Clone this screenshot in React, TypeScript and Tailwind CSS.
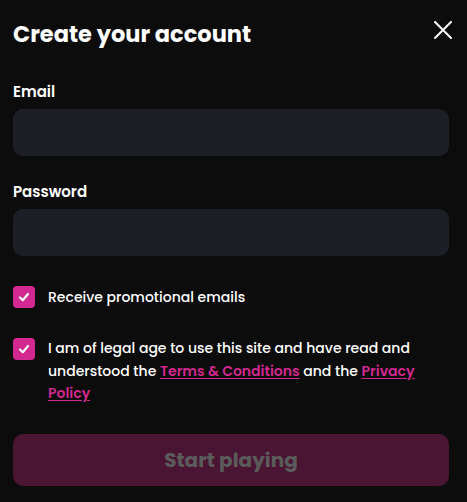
import React from "react";

const font = { fontFamily: "Poppins, 'DejaVu Sans', 'Noto Sans', sans-serif" };

function Check() {
  return (
    <div className="w-[22px] h-[22px] shrink-0 rounded-[4px] bg-[#d3288f] flex items-center justify-center">
      <svg width="14" height="14" viewBox="0 0 14 14" fill="none">
        <path d="M3 7.5 L5.8 10.2 L11 4" stroke="white" strokeWidth="2.2" strokeLinecap="round" strokeLinejoin="round" />
      </svg>
    </div>
  );
}

export default function App() {
  return (
    <div className="w-[467px] h-[502px] bg-[#0c0c0c] text-white pl-[13px] pr-[18px] pt-[18px] overflow-hidden" style={font}>
      <div className="flex items-start justify-between">
        <h1 className="text-[22.5px] leading-[32px] font-bold">Create your account</h1>
        <button className="mr-[-3px] mt-[3px] w-[18px] h-[18px] flex items-center justify-center">
          <svg width="18" height="18" viewBox="0 0 18 18" fill="none">
            <path d="M1 1 L17 17 M17 1 L1 17" stroke="white" strokeWidth="2" strokeLinecap="round" />
          </svg>
        </button>
      </div>

      <div className="mt-[32px]">
        <label className="block text-[15px] leading-[20px] font-semibold">Email</label>
        <div className="mt-[7px] h-[47px] rounded-[10px] bg-[#1c1f26]" />
      </div>

      <div className="mt-[26px]">
        <label className="block text-[15px] leading-[20px] font-semibold">Password</label>
        <div className="mt-[7px] h-[47px] rounded-[10px] bg-[#1c1f26]" />
      </div>

      <div className="mt-[30px] flex items-center gap-[13px]">
        <Check />
        <span className="text-[14px] leading-[22px] font-medium">Receive promotional emails</span>
      </div>

      <div className="mt-[30px] flex items-start gap-[13px]">
        <Check />
        <p className="text-[14px] leading-[22.5px] font-medium -mt-[1px]">
          I am of legal age to use this site and have read and understood the{" "}
          <a className="text-[#d3288f] font-semibold underline underline-offset-2">Terms &amp; Conditions</a> and the{" "}
          <a className="text-[#d3288f] font-semibold underline underline-offset-2">Privacy Policy</a>
        </p>
      </div>

      <button className="mt-[29px] w-full h-[52px] rounded-[10px] bg-[#4a1533] text-[#5b5b5b] text-[20px] font-bold">
        Start playing
      </button>
    </div>
  );
}
